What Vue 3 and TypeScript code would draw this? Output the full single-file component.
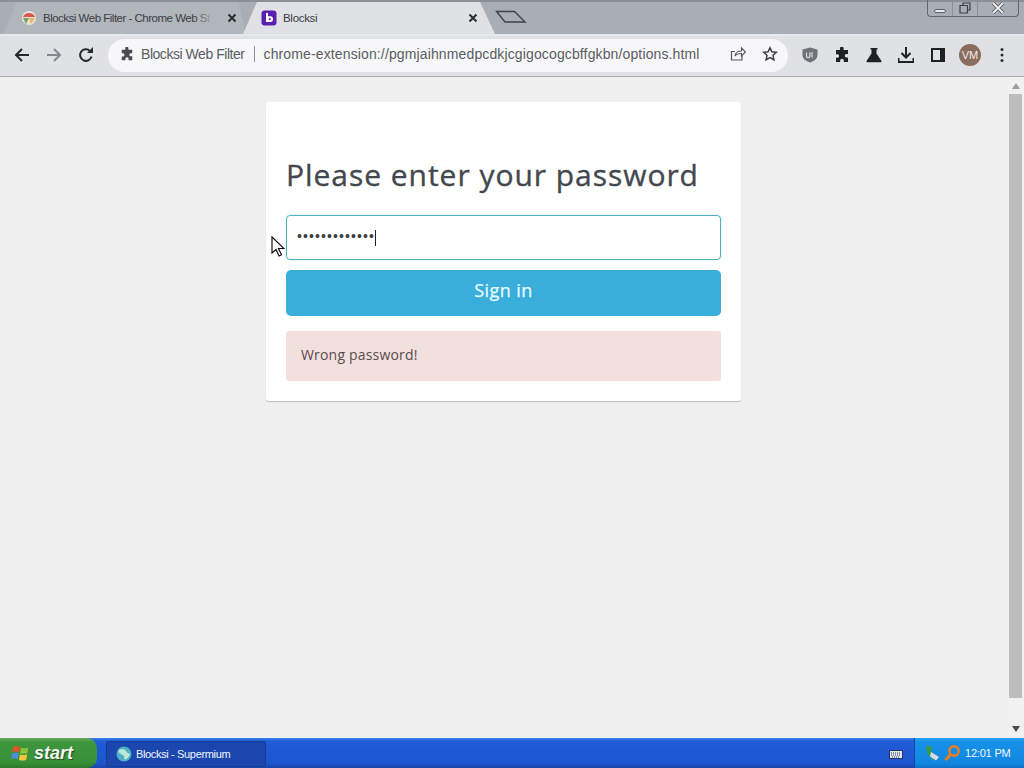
<template>
  <div class="screen">
    <header class="chrome">
      <div class="tabstrip">
        <div class="tab tab-off">
          <svg class="favicon" viewBox="0 0 16 16">
            <circle cx="8" cy="8" r="7" fill="#e8e2dc" />
            <path d="M2 7a6.5 6.5 0 0 1 12 0H8z" fill="#d9574a" />
            <path d="M2 8l3 6 3-6z" fill="#7f9a6a" />
            <path d="M8 8h6l-4 6z" fill="#e3b95c" />
          </svg>
          <span class="tab-title">Blocksi Web Filter - Chrome Web St</span>
          <span class="tab-fade"></span>
          <svg class="tab-x" viewBox="0 0 10 10"><path d="M1.5 1.5l7 7M8.500 1.500l-7 7" /></svg>
        </div>
        <div class="tab tab-on">
          <svg class="favicon" viewBox="0 0 16 16">
            <rect x="0.500" y="0.500" width="15" height="15" rx="3" fill="#5b1fb0" />
            <path d="M5 3v9h4.200a2.900 2.900 0 0 0 0-5.800H7V3z" fill="#fff" />
            <circle cx="8.800" cy="9.100" r="1.100" fill="#5b1fb0" />
          </svg>
          <span class="tab-title">Blocksi</span>
          <svg class="tab-x" viewBox="0 0 10 10"><path d="M1.5 1.5l7 7M8.500 1.500l-7 7" /></svg>
        </div>
        <svg class="newtab" viewBox="0 0 32 14"><path d="M1.500 1.500h18l10.500 10.500h-20z" /></svg>
        <div class="winbtns">
          <span class="winbtn w-min"><i></i></span>
          <span class="winbtn w-max">
            <svg viewBox="0 0 12 12"><path d="M4 3V1h7v7H9M1 3.500h7.500V11H1z" /></svg>
          </span>
          <span class="winbtn w-close">
            <svg viewBox="0 0 14 12">
              <path class="x-edge" d="M2 1l10 10M12 1L2 11" />
              <path class="x-core" d="M2 1l10 10M12 1L2 11" />
            </svg>
          </span>
        </div>
      </div>
      <div class="toolbar">
        <svg class="nav" viewBox="0 0 16 16"><path d="M15 8H2M8 2L2 8l6 6" /></svg>
        <svg class="nav dim" viewBox="0 0 16 16"><path d="M1 8h13M8 2l6 6-6 6" /></svg>
        <svg class="nav reload" viewBox="0 0 16 16">
          <path d="M13.500 9.500A5.800 5.800 0 1 1 12 4" />
          <path class="solid" d="M9 6h6V0z" />
        </svg>
        <div class="omnibox">
          <svg class="puzzle small" viewBox="0 0 16 16">
            <path d="M6 1.500a1.800 1.800 0 0 1 3.600 0V3H14v4h-1.500a1.800 1.800 0 0 0 0 3.600H14V15H9.800v-1.500a1.800 1.800 0 0 0-3.600 0V15H2v-4.200h1.300a1.800 1.800 0 0 0 0-3.600H2V3h4z" />
          </svg>
          <span class="site">Blocksi Web Filter</span>
          <span class="pipe"></span>
          <span class="url">chrome-extension://pgmjaihnmedpcdkjcgigocogcbffgkbn/options.html</span>
          <svg class="omni-ic share" viewBox="0 0 16 16">
            <path d="M12 9.500V14H1.500V5.500H5M5 10c.5-3.500 3-5 6.500-5V2l4 4-4 4V7.500C8.500 7.500 6.500 8 5 10z" />
          </svg>
          <svg class="omni-ic star" viewBox="0 0 16 16">
            <path d="M8 1.800l1.900 4 4.400.5-3.300 3 .9 4.400L8 11.500l-3.900 2.200.9-4.400-3.300-3 4.400-.5z" />
          </svg>
        </div>
        <div class="extensions">
          <svg class="ext" viewBox="0 0 16 16">
            <path d="M8 .5l7.500 2V8c0 3.700-3.300 6.200-7.500 7.500C3.800 14.200.5 11.700.5 8V2.500z" fill="#6f7378" />
            <path d="M4.500 5.500V9a1.700 1.700 0 0 0 3.400 0V5.500M10 5v5.500" fill="none" stroke="#e8e8e8" stroke-width="1.100" />
          </svg>
          <svg class="ext" viewBox="0 0 16 16">
            <path fill="#202124" d="M6 1.500a1.800 1.800 0 0 1 3.600 0V3H14v4h-1.500a1.800 1.800 0 0 0 0 3.600H14V15H9.800v-1.500a1.800 1.800 0 0 0-3.600 0V15H2v-4.200h1.300a1.800 1.800 0 0 0 0-3.600H2V3h4z" />
          </svg>
          <svg class="ext" viewBox="0 0 16 16">
            <path fill="#202124" d="M4.500 1h7v1.500h-1v4L15.500 14a.8.8 0 0 1-.7 1.200H1.200a.8.8 0 0 1-.7-1.200l5-7.500v-4h-1z" />
          </svg>
          <svg class="ext" viewBox="0 0 16 16">
            <path fill="none" stroke="#202124" stroke-width="2" d="M8 0v10M3.500 6L8 10.500 12.500 6M0.500 11v4h15v-4" />
          </svg>
          <svg class="ext" viewBox="0 0 16 16">
            <path fill="#202124" d="M1 1h14v14H1z" />
            <path fill="#dfe1e5" d="M3 3h7v10H3z" />
          </svg>
          <span class="avatar">VM</span>
          <svg class="ext menu" viewBox="0 0 4 16">
            <circle cx="2" cy="2.500" r="1.500" /><circle cx="2" cy="8" r="1.500" /><circle cx="2" cy="13.500" r="1.500" />
          </svg>
        </div>
      </div>
    </header>

    <div class="viewport">
      <main class="page">
        <form class="card" @submit.prevent>
          <h1>Please enter your password</h1>
          <div class="field">
            <span class="dots">{{ dots }}</span><span class="caret"></span>
          </div>
          <button class="signin" type="button">Sign in</button>
          <div class="alert">Wrong password!</div>
        </form>
      </main>
      <aside class="scrollbar">
        <i class="arrow up"></i>
        <div class="thumb"></div>
        <i class="arrow down"></i>
      </aside>
      <svg class="pointer" viewBox="0 0 14 22">
        <path d="M1 1v16l4-3.500 3 6.500 2.500-1.200-3-6.300H13z" />
      </svg>
    </div>

    <footer class="taskbar">
      <div class="start">
        <svg class="flag" viewBox="0 1.500 16 15">
          <path d="M2 3.500c2-1 4-1 6 0l-1 5c-2-1-4-1-6 0z" fill="#e2552b" />
          <path d="M9 4c2 1 4 1 6.500 0l-1 5c-2 1-4 1-6.500 0z" fill="#8fc13e" />
          <path d="M1 9.500c2-1 4-1 6 0l-1 5c-2-1-4-1-6 0z" fill="#4b8fdc" />
          <path d="M8 10c2 1 4 1 6.500 0l-1 5c-2 1-4.500 1-6.500 0z" fill="#f0c53a" />
        </svg>
        <span>start</span>
      </div>
      <div class="task">
        <svg class="globe" viewBox="0 0 16 16">
          <circle cx="8" cy="8" r="7.500" fill="#4fb0c8" />
          <path d="M3 4c3-2 6-1 7 1s3 3 4 3c-1 4-4 6-6 5 1-3-1-4-3-5S2 6 3 4z" fill="#bfe9d6" />
        </svg>
        <span>Blocksi - Supermium</span>
      </div>
      <div class="lang">
        <svg viewBox="0 0 14 11" class="kbd">
          <rect x="0.500" y="2.500" width="13" height="8" fill="#dfe6f2" stroke="#26345f" />
          <path d="M2 5h10M2 7h10M3 9h8" stroke="#26345f" stroke-dasharray="1 1" />
        </svg>
      </div>
      <div class="tray">
        <svg class="tray-ic" viewBox="0 0 16 16">
          <path d="M1 1h6l-1 5 5 5-3 4-6-7z" fill="#3a9a4a" />
          <path d="M6 7l8 5-3 3.500-6-4z" fill="#d8dce2" />
        </svg>
        <svg class="tray-ic" viewBox="0 0 16 16">
          <circle cx="10" cy="6" r="4.700" fill="none" stroke="#f07d1a" stroke-width="2.400" />
          <path d="M7 9l-5.500 6" stroke="#f07d1a" stroke-width="3" />
        </svg>
        <span class="clock">12:01 PM</span>
      </div>
    </footer>
  </div>
</template>

<script setup lang="ts">
const dots = '•'.repeat(13)
</script>

<style>
html,
body {
  margin: 0;
  overflow: hidden;
}
</style>

<style scoped>
.screen {
  width: 1024px;
  height: 768px;
  display: flex;
  flex-direction: column;
  overflow: hidden;
  font-family: "Open Sans", "Liberation Sans", sans-serif;
}

/* browser frame */
.chrome {
  flex: none;
  height: 77px;
  display: flex;
  flex-direction: column;
  border-bottom: 1px solid #a9abaf;
  box-sizing: border-box;
}
.tabstrip {
  height: 34px;
  flex: none;
  background: #a9aeb6;
  display: flex;
  align-items: flex-end;
  padding-left: 3px;
  position: relative;
  box-shadow: inset 0 2px 0 #8c8f96;
}
.tab {
  height: 32px;
  display: flex;
  align-items: center;
  box-sizing: border-box;
  font-family: "Liberation Sans", sans-serif;
  font-size: 11.5px;
  color: #3b3e44;
  position: relative;
  letter-spacing: -0.3px;
}
.tab-off {
  width: 242px;
  padding: 0 8px 0 18px;
  background: #b1b5bc;
  clip-path: polygon(0 100%, 14px 0, 236px 0, 242px 100%);
  letter-spacing: -0.5px;
}
.tab-off .favicon {
  margin-right: 6px;
}
.tab-on {
  width: 252px;
  margin-left: -2px;
  padding: 0 17px 0 18px;
  background: #dfe1e5;
  clip-path: polygon(0 100%, 14px 0, 237px 0, 252px 100%);
}
.tab-on .favicon {
  margin-right: 6px;
}
.favicon {
  width: 16px;
  height: 16px;
  flex: none;
  margin-right: 7px;
}
.tab-title {
  flex: 1;
  overflow: hidden;
  white-space: nowrap;
}
.tab-fade {
  position: absolute;
  right: 28px;
  top: 0;
  width: 22px;
  height: 100%;
  background: linear-gradient(90deg, rgba(177, 181, 188, 0), #b1b5bc 85%);
}
.tab-x {
  width: 10px;
  height: 10px;
  flex: none;
  fill: none;
  stroke: #2b2d31;
  stroke-width: 2;
}
.newtab {
  width: 32px;
  height: 14px;
  margin: 0 0 10px 0;
  fill: none;
  stroke: #3d4147;
  stroke-width: 1.4;
}
.winbtns {
  position: absolute;
  top: 0;
  right: 5px;
  height: 16px;
  display: flex;
  border: 1px solid #62666d;
  border-top: 0;
  border-radius: 0 0 4px 4px;
}
.winbtn {
  display: flex;
  align-items: center;
  justify-content: center;
  height: 100%;
  border-right: 1px solid #8a8e95;
  box-sizing: border-box;
}
.winbtn svg {
  fill: none;
  stroke: #3c4047;
  stroke-width: 1.2;
}
.w-min {
  width: 25px;
}
.w-min i {
  width: 12px;
  height: 4px;
  margin-top: 5px;
  background: #e9ebee;
  border: 1px solid #5e6269;
  border-radius: 2px;
  box-sizing: border-box;
}
.w-max {
  width: 25px;
}
.w-max svg {
  width: 12px;
  height: 12px;
}
.w-close {
  width: 40px;
  border-right: 0;
}
.w-close svg {
  width: 14px;
  height: 12px;
}
.w-close .x-edge {
  stroke: #50545b;
  stroke-width: 3.400;
}
.w-close .x-core {
  stroke: #eef0f2;
  stroke-width: 1.800;
}

.toolbar {
  flex: 1;
  background: #dfe1e5;
  display: flex;
  align-items: center;
  padding: 0 13px 0 14px;
  box-shadow: inset 0 2px 0 #e8e9ec;
}
.nav {
  width: 16px;
  height: 16px;
  flex: none;
  margin-right: 16px;
  fill: none;
  stroke: #26282c;
  stroke-width: 2;
}
.nav.dim {
  stroke: #85888d;
}
.nav.reload {
  margin-right: 14px;
}
.nav .solid {
  fill: #26282c;
  stroke: none;
}
.omnibox {
  width: 680px;
  height: 33px;
  flex: none;
  box-sizing: border-box;
  background: #f7f7f9;
  border-radius: 17px;
  display: flex;
  align-items: center;
  padding: 0 10px 2px 12px;
  font-family: "Liberation Sans", sans-serif;
  font-size: 14px;
  color: #5a5d62;
  white-space: nowrap;
}
.puzzle.small {
  width: 14px;
  height: 14px;
  flex: none;
  fill: #4a4c50;
  margin-right: 7px;
}
.pipe {
  width: 1px;
  height: 16px;
  background: #8c8f94;
  margin: 0 9px 0 9px;
  flex: none;
}
.site {
  letter-spacing: -0.46px;
}
.url {
  flex: 1;
  letter-spacing: 0.13px;
}
.omni-ic {
  width: 16px;
  height: 16px;
  flex: none;
  fill: none;
  stroke: #56595e;
  stroke-width: 1.200;
}
.share {
  margin-right: 16px;
}
.star {
  stroke: #3b3e43;
  stroke-width: 1.500;
}
.extensions {
  display: flex;
  align-items: center;
  margin-left: 14px;
  gap: 16px;
}
.ext {
  width: 16px;
  height: 16px;
  flex: none;
}
.avatar {
  width: 22px;
  height: 22px;
  margin: 0 -3px;
  border-radius: 50%;
  background: #8a6d5c;
  color: #f3ecea;
  font-size: 11px;
  font-family: "Liberation Sans", sans-serif;
  display: flex;
  align-items: center;
  justify-content: center;
}
.menu {
  width: 4px;
  margin-left: 6px;
  fill: #2a2c30;
}

/* page */
.viewport {
  flex: 1;
  min-height: 0;
  display: flex;
  position: relative;
  background: #f0f0f0;
}
.page {
  flex: 1;
  display: flex;
  justify-content: center;
  align-items: flex-start;
  padding-top: 25px;
}
.card {
  width: 475px;
  height: 299px;
  box-sizing: border-box;
  padding: 0 20px;
  background: #fff;
  border-radius: 3px;
  box-shadow: 0 1px 1px rgba(0, 0, 0, 0.2);
  display: flex;
  flex-direction: column;
}
h1 {
  margin: 52px 0 20px;
  font-size: 30px;
  line-height: 41px;
  font-weight: 500;
  color: #43484e;
  letter-spacing: 0.96px;
  -webkit-text-stroke: 0.35px #43484e;
  white-space: nowrap;
}
.field {
  height: 45px;
  box-sizing: border-box;
  border: 1px solid #4fb0bd;
  border-radius: 4px;
  box-shadow: 0 0 2px rgba(102, 200, 210, 0.4);
  display: flex;
  align-items: center;
  padding: 0 10px 3px;
  font-family: "Liberation Sans", sans-serif;
  color: #3d4045;
}
.dots {
  font-size: 14px;
  letter-spacing: 1.100px;
}
.caret {
  width: 1px;
  height: 16px;
  margin-top: 3px;
  background: #222;
}
.signin {
  margin-top: 10px;
  height: 46px;
  border: 0;
  border-radius: 5px;
  background: #39aedb;
  color: #e9fbff;
  font-family: inherit;
  font-size: 18px;
  font-weight: 500;
  letter-spacing: 0.45px;
  -webkit-text-stroke: 0.25px #e9fbff;
  padding: 0 0 6px;
}
.alert {
  margin-top: 15px;
  height: 50px;
  box-sizing: border-box;
  padding: 0 15px 3px;
  display: flex;
  align-items: center;
  background: #f2e0df;
  color: #5a4c4c;
  font-size: 14px;
  letter-spacing: 0.18px;
  border-radius: 2px;
}
.scrollbar {
  width: 17px;
  flex: none;
  background: #f1f1f1;
  display: flex;
  flex-direction: column;
  align-items: center;
}
.arrow {
  flex: none;
  width: 0;
  height: 0;
  border-left: 4px solid transparent;
  border-right: 4px solid transparent;
}
.arrow.up {
  margin: 6px 0 5px;
  border-bottom: 6px solid #9d9d9d;
}
.arrow.down {
  margin: 6px 0 6px;
  border-top: 6px solid #4a4a4a;
}
.thumb {
  width: 13px;
  flex: 1;
  margin-bottom: 22px;
  background: #bdbdbd;
}
.pointer {
  position: absolute;
  left: 271px;
  top: 159px;
  width: 14px;
  height: 22px;
  fill: #fff;
  stroke: #111;
  stroke-width: 1.200;
}

/* taskbar */
.taskbar {
  flex: none;
  height: 30px;
  display: flex;
  align-items: stretch;
  background: linear-gradient(180deg, #3b85e8 0, #1f5cd8 10%, #1d55cc 85%, #1a45a8 100%);
  color: #f3f7ff;
  font-family: "Liberation Sans", sans-serif;
}
.start {
  width: 97px;
  flex: none;
  box-sizing: border-box;
  padding-left: 11px;
  display: flex;
  align-items: center;
  gap: 5px;
  background: linear-gradient(180deg, #6aa65e 0, #3d953c 15%, #389138 80%, #2a7a2c 100%);
  border-radius: 0 10px 10px 0;
  font-style: italic;
  font-weight: 700;
  font-size: 18px;
  color: #f4f6f2;
  text-shadow: 1px 1px 1px #1c4d1c;
}
.flag {
  width: 18px;
  height: 18px;
}
.task {
  width: 160px;
  flex: none;
  margin: 3px 0 1px 9px;
  box-sizing: border-box;
  padding-left: 9px;
  display: flex;
  align-items: center;
  gap: 4px;
  font-size: 11px;
  letter-spacing: -0.35px;
  background: #1a46ad;
  border: 1px solid #183c96;
  border-radius: 2px;
}
.globe {
  width: 16px;
  height: 16px;
  flex: none;
}
.lang {
  margin-left: auto;
  width: 43px;
  display: flex;
  align-items: center;
  justify-content: center;
  padding-left: 6px;
  box-sizing: border-box;
}
.kbd {
  width: 14px;
  height: 11px;
}
.tray {
  width: 110px;
  flex: none;
  box-sizing: border-box;
  padding-left: 10px;
  display: flex;
  align-items: center;
  gap: 3px;
  background: linear-gradient(180deg, #2aa2ef 0, #1590e8 15%, #1288e0 85%, #1070c8 100%);
  border-left: 1px solid #1348a8;
  font-size: 11px;
  letter-spacing: -0.2px;
}
.tray-ic {
  width: 16px;
  height: 16px;
  flex: none;
}
.clock {
  margin-left: 2px;
  white-space: nowrap;
}
</style>
